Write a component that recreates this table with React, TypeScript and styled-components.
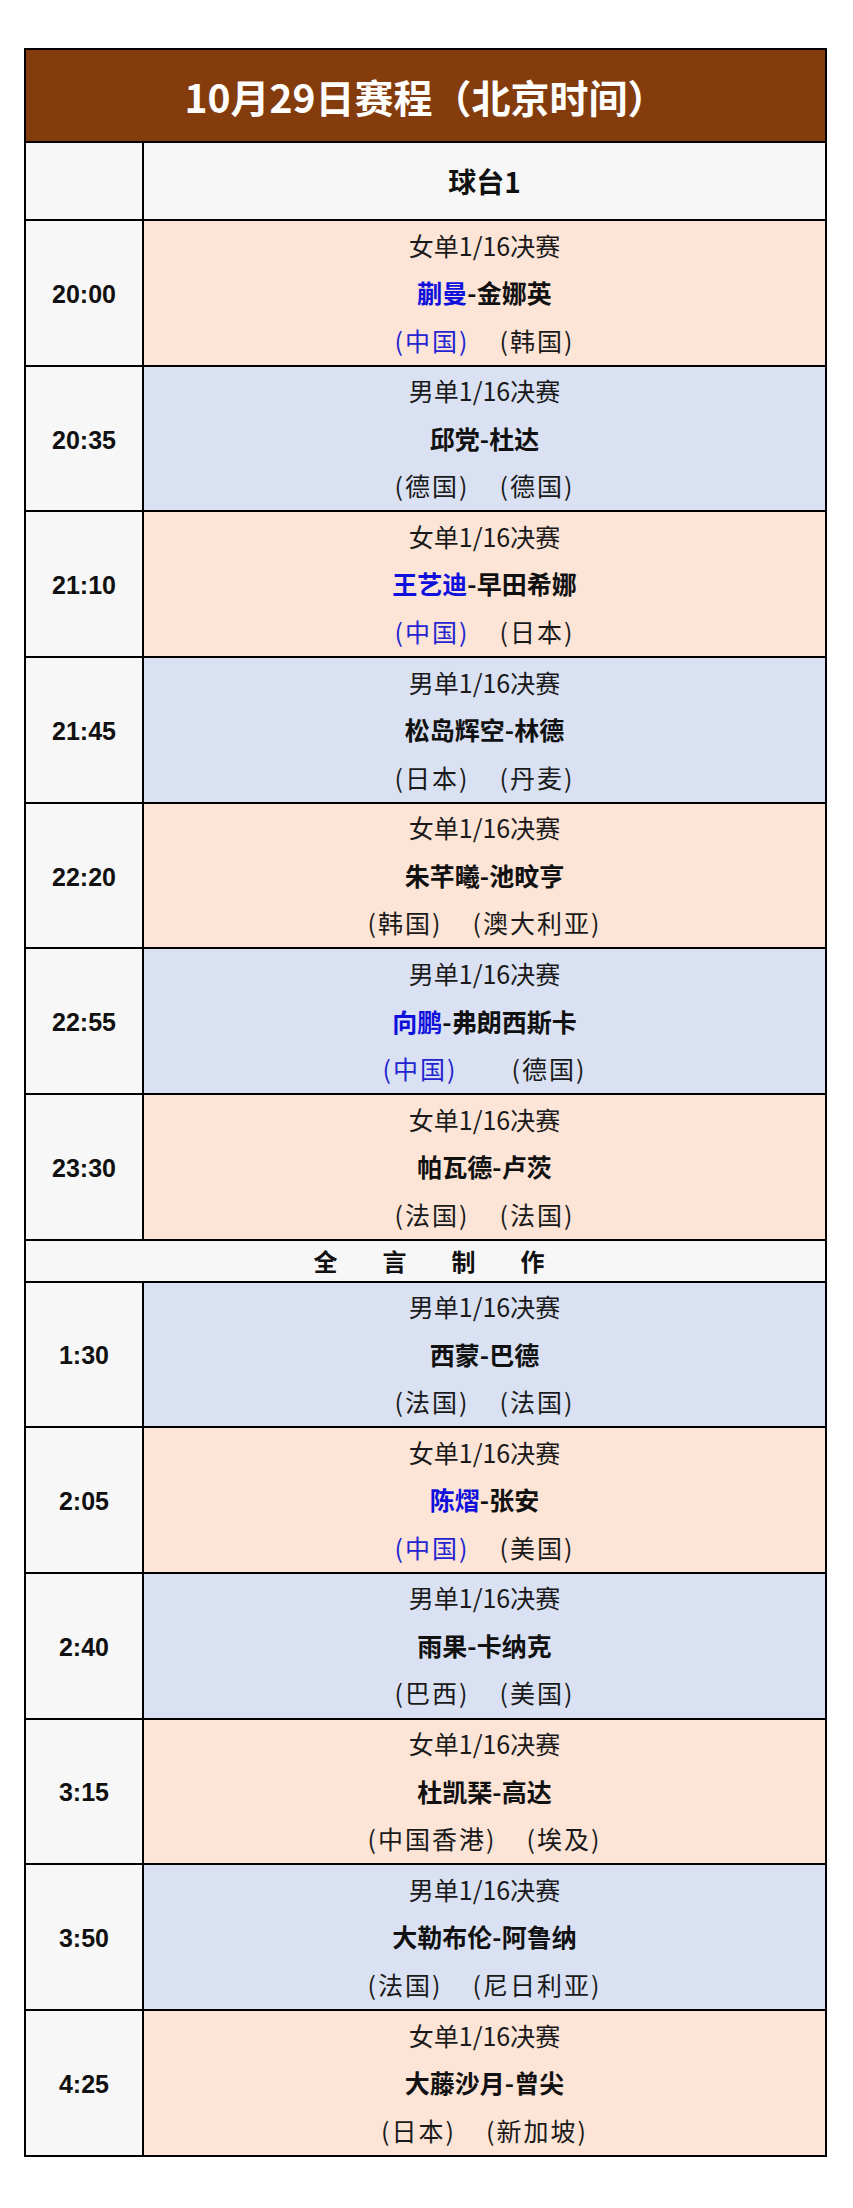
import React from 'react';
import styled, { createGlobalStyle } from 'styled-components';

type Match = {
    time: string;
    women: boolean;
    home: string;
    away: string;
    homeFrom: string;
    awayFrom: string;
    cn?: boolean;
    gap?: number;
};

const before: Match[] = [
    { time: '20:00', women: true, home: '蒯曼', away: '金娜英', homeFrom: '中国', awayFrom: '韩国', cn: true },
    { time: '20:35', women: false, home: '邱党', away: '杜达', homeFrom: '德国', awayFrom: '德国' },
    { time: '21:10', women: true, home: '王艺迪', away: '早田希娜', homeFrom: '中国', awayFrom: '日本', cn: true },
    { time: '21:45', women: false, home: '松岛辉空', away: '林德', homeFrom: '日本', awayFrom: '丹麦' },
    { time: '22:20', women: true, home: '朱芊曦', away: '池旼亨', homeFrom: '韩国', awayFrom: '澳大利亚' },
    { time: '22:55', women: false, home: '向鹏', away: '弗朗西斯卡', homeFrom: '中国', awayFrom: '德国', cn: true, gap: 54 },
    { time: '23:30', women: true, home: '帕瓦德', away: '卢茨', homeFrom: '法国', awayFrom: '法国' },
];

const after: Match[] = [
    { time: '1:30', women: false, home: '西蒙', away: '巴德', homeFrom: '法国', awayFrom: '法国' },
    { time: '2:05', women: true, home: '陈熠', away: '张安', homeFrom: '中国', awayFrom: '美国', cn: true },
    { time: '2:40', women: false, home: '雨果', away: '卡纳克', homeFrom: '巴西', awayFrom: '美国' },
    { time: '3:15', women: true, home: '杜凯琹', away: '高达', homeFrom: '中国香港', awayFrom: '埃及' },
    { time: '3:50', women: false, home: '大勒布伦', away: '阿鲁纳', homeFrom: '法国', awayFrom: '尼日利亚' },
    { time: '4:25', women: true, home: '大藤沙月', away: '曾尖', homeFrom: '日本', awayFrom: '新加坡' },
];

const MatchRow: React.FC<{ m: Match }> = ({ m }) => (
    <Row>
        <TimeCell>{m.time}</TimeCell>
        <GameCell $women={m.women}>
            <Line>{m.women ? '女单1/16决赛' : '男单1/16决赛'}</Line>
            <Names>
                <Player $cn={m.cn}>{m.home}</Player>-<Player>{m.away}</Player>
            </Names>
            <Countries style={m.gap ? { gap: m.gap } : undefined}>
                <Country $cn={m.cn}>({m.homeFrom})</Country>
                <Country>({m.awayFrom})</Country>
            </Countries>
        </GameCell>
    </Row>
);

const App: React.FC = () => (
    <>
        <GlobalStyle />
        <Sheet>
            <Title>10月29日赛程（北京时间）</Title>
            <HeadRow>
                <TimeCell />
                <TableName>球台1</TableName>
            </HeadRow>
            {before.map((m) => (
                <MatchRow key={m.time} m={m} />
            ))}
            <Credit>全言制作</Credit>
            {after.map((m) => (
                <MatchRow key={m.time} m={m} />
            ))}
        </Sheet>
    </>
);

const GlobalStyle = createGlobalStyle`
    body {
        margin: 0;
        background: #ffffff;
        font-family: "Noto Sans CJK SC", "Noto Sans", sans-serif;
    }
`;

const Sheet = styled.div`
    box-sizing: border-box;
    width: 803px;
    margin: 48px 0 0 24px;
    border: 2px solid #000;
    display: flex;
    flex-direction: column;
    > *:last-child {
        border-bottom: none;
    }
`;

const Title = styled.div`
    height: 91px;
    display: flex;
    align-items: center;
    justify-content: center;
    background: #843c0c;
    border-bottom: 2px solid #000;
    color: #fff;
    font-size: 39px;
    font-weight: 700;
`;

const Row = styled.div`
    display: grid;
    grid-template-columns: 118px 1fr;
    height: 143.7px;
    border-bottom: 2px solid #000;
`;

const HeadRow = styled(Row)`
    height: 76px;
`;

const TimeCell = styled.div`
    display: flex;
    align-items: center;
    justify-content: center;
    padding-top: 3px;
    background: #f7f7f7;
    border-right: 2px solid #000;
    font-family: "Liberation Sans", Arial, sans-serif;
    font-size: 25px;
    font-weight: 700;
    color: #111;
`;

const TableName = styled.div`
    display: flex;
    align-items: center;
    justify-content: center;
    background: #f7f7f7;
    font-size: 28px;
    font-weight: 700;
    color: #111;
`;

const GameCell = styled.div<{ $women: boolean }>`
    display: flex;
    flex-direction: column;
    align-items: center;
    justify-content: center;
    background: ${(p) => (p.$women ? '#fce4d6' : '#d9e1f2')};
    color: #1a1a1a;
    font-size: 25px;
`;

const Line = styled.div`
    line-height: 47.5px;
    white-space: nowrap;
`;

const Names = styled(Line)`
    font-weight: 700;
    color: #111;
`;

const Player = styled.span<{ $cn?: boolean }>`
    color: ${(p) => (p.$cn ? '#1010dc' : '#111')};
`;

const Countries = styled(Line)`
    display: flex;
    gap: 30px;
`;

const Country = styled.span<{ $cn?: boolean }>`
    letter-spacing: 2px;
    color: ${(p) => (p.$cn ? '#2424d0' : '#1a1a1a')};
`;

const Credit = styled.div`
    height: 39.7px;
    display: flex;
    align-items: center;
    justify-content: center;
    background: #f7f7f7;
    border-bottom: 2px solid #000;
    font-size: 24px;
    font-weight: 700;
    letter-spacing: 45px;
    padding-left: 52px;
    color: #111;
`;

export default App;
